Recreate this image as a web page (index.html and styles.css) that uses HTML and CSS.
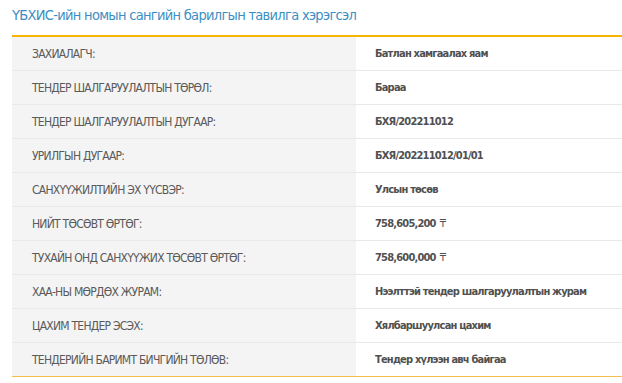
FILE: index.html
```html
<!DOCTYPE html>
<html lang="mn">
<head>
<meta charset="utf-8">
<link rel="stylesheet" href="styles.css">
</head>
<body>
<div class="panel">
  <h2 class="title">ҮБХИС-ийн номын сангийн барилгын тавилга хэрэгсэл</h2>
  <div class="table">
    <div class="row"><div class="label">ЗАХИАЛАГЧ:</div><div class="value">Батлан хамгаалах яам</div></div>
    <div class="row"><div class="label">ТЕНДЕР ШАЛГАРУУЛАЛТЫН ТӨРӨЛ:</div><div class="value">Бараа</div></div>
    <div class="row"><div class="label">ТЕНДЕР ШАЛГАРУУЛАЛТЫН ДУГААР:</div><div class="value">БХЯ/202211012</div></div>
    <div class="row"><div class="label">УРИЛГЫН ДУГААР:</div><div class="value">БХЯ/202211012/01/01</div></div>
    <div class="row"><div class="label">САНХҮҮЖИЛТИЙН ЭХ ҮҮСВЭР:</div><div class="value">Улсын төсөв</div></div>
    <div class="row"><div class="label">НИЙТ ТӨСӨВТ ӨРТӨГ:</div><div class="value">758,605,200 <span class="cur">₸</span></div></div>
    <div class="row"><div class="label">ТУХАЙН ОНД САНХҮҮЖИХ ТӨСӨВТ ӨРТӨГ:</div><div class="value">758,600,000 <span class="cur">₸</span></div></div>
    <div class="row"><div class="label">ХАА-НЫ МӨРДӨХ ЖУРАМ:</div><div class="value">Нээлттэй тендер шалгаруулалтын журам</div></div>
    <div class="row"><div class="label">ЦАХИМ ТЕНДЕР ЭСЭХ:</div><div class="value">Хялбаршуулсан цахим</div></div>
    <div class="row"><div class="label">ТЕНДЕРИЙН БАРИМТ БИЧГИЙН ТӨЛӨВ:</div><div class="value">Тендер хүлээн авч байгаа</div></div>
  </div>
</div>
</body>
</html>
```
FILE: styles.css
```css
html, body {
  margin: 0;
  padding: 0;
  background: #ffffff;
}
.panel {
  padding: 0 0 0 12px;
  font-family: "DejaVu Sans Condensed", "DejaVu Sans", sans-serif;
  font-stretch: condensed;
}
.title {
  margin: 0;
  height: 35px;
  line-height: 31px;
  font-size: 14.5px;
  font-weight: normal;
  color: #3b8ec4;
  letter-spacing: -0.7px;
  white-space: nowrap;
}
.table {
  border-top: 2px solid #f7b500;
  border-bottom: 1px solid #f2c04a;
}
.row {
  display: grid;
  grid-template-columns: 344px 1fr;
  height: 34px;
  border-top: 1px solid #e9e9e9;
  box-sizing: border-box;
}
.row:first-child {
  border-top: none;
  height: 33px;
}
.label {
  background: #f4f4f4;
  padding-left: 20px;
  display: flex;
  align-items: center;
  font-size: 12px;
  color: #5a5a5a;
  letter-spacing: -0.75px;
  white-space: nowrap;
}
.value {
  padding-left: 19px;
  display: flex;
  align-items: center;
  font-size: 11px;
  font-weight: bold;
  color: #505050;
  letter-spacing: -0.8px;
  white-space: nowrap;
}
.cur {
  font-weight: normal;
  margin-left: 4px;
}
```
